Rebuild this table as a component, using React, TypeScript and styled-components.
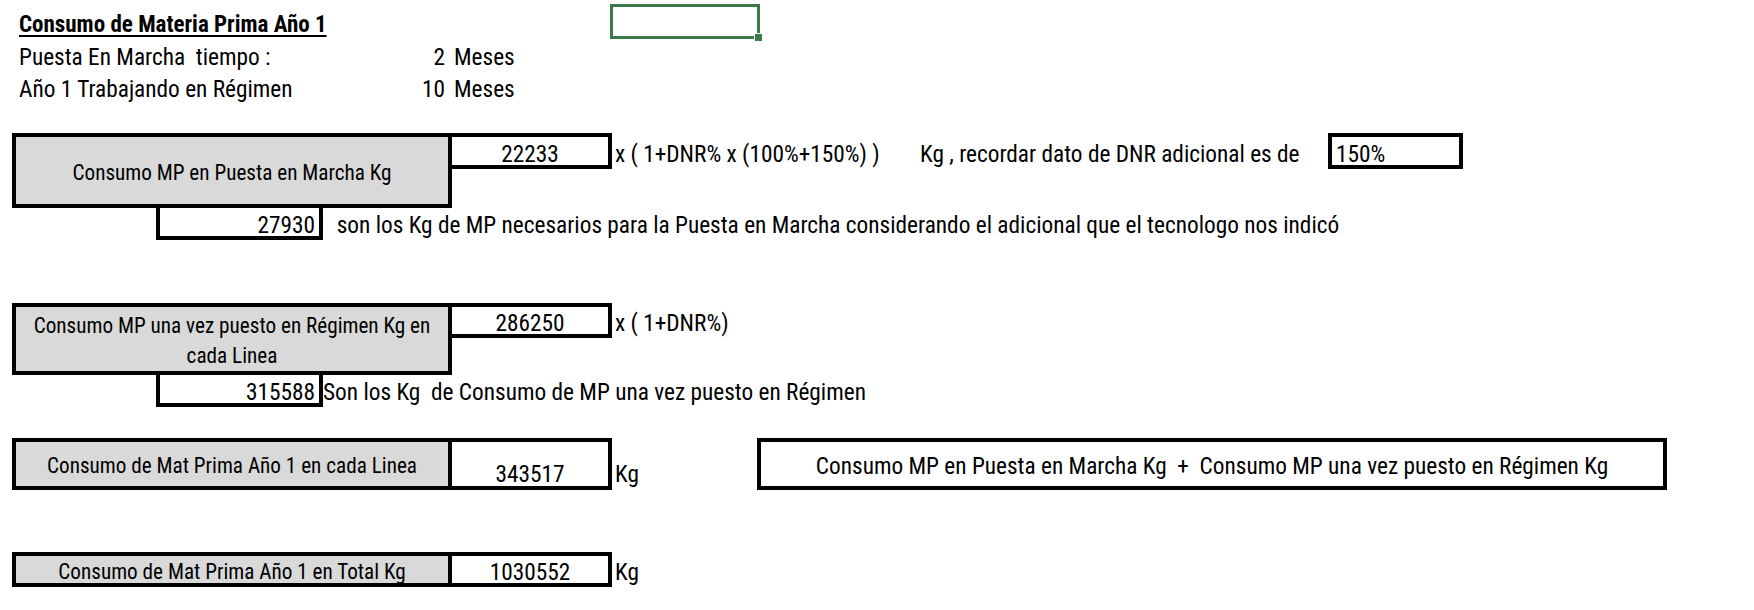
import React from 'react'
import styled, { createGlobalStyle } from 'styled-components'

const GlobalStyle = createGlobalStyle`
  html, body { margin: 0; padding: 0; background: #ffffff; }
  body { font-family: "Roboto Condensed", "Liberation Sans", sans-serif; color: #000; }
`

// ---| Sheet |--------------------------------------------

const Sheet = styled.main`
  position: relative;
  width: 1754px;
  height: 610px;
  padding: 6px 0 0 12px;
  box-sizing: border-box;
  font-size: 23.3px;
  overflow: hidden;
`

// celda seleccionada (marco verde de excel)
const Selected = styled.div`
  position: absolute;
  left: 610px;
  top: 4px;
  width: 150px;
  height: 35px;
  box-sizing: border-box;
  border: 3px solid #3b7a4a;

  &::after {
    content: '';
    position: absolute;
    right: -6px;
    bottom: -6px;
    width: 7px;
    height: 7px;
    background: #3b7a4a;
    border: 1px solid #fff;
  }
`

// ---| Header |-------------------------------------------

const HeaderRow = styled.div`
  height: 32px;
  padding: 5px 0 0 7px;
  box-sizing: border-box;
  display: flex;
  align-items: center;
`

const Title = styled.h1`
  margin: 0;
  font-size: 23px;
  font-weight: 700;
  text-decoration: underline;
  text-underline-offset: 3px;
  text-decoration-thickness: 1.5px;
`

const InfoLabel = styled.span`
  width: 330px;
`

const InfoNum = styled.span`
  width: 96px;
  text-align: right;
`

const InfoUnit = styled.span`
  margin-left: 9px;
`

// ---| Bloques |------------------------------------------

const Block = styled.section<{ $gap: number }>`
  margin-top: ${p => p.$gap}px;
  display: flex;
  flex-direction: column;
`

const MainRow = styled.div<{ $h: number }>`
  height: ${p => p.$h}px;
  display: flex;
  align-items: flex-start;
`

const Label = styled.div<{ $h: number }>`
  width: 440px;
  height: ${p => p.$h}px;
  padding-top: 4px;
  box-sizing: border-box;
  border: 4px solid #000;
  background: #d9d9d9;
  font-size: 21.2px;
  line-height: 30px;
  text-align: center;
  display: flex;
  align-items: center;
  justify-content: center;
`

const Value = styled.div<{ $h: number; $align?: 'center' | 'left' | 'right'; $bottom?: boolean }>`
  width: 164px;
  height: ${p => p.$h}px;
  margin-left: -4px;
  padding: ${p => (p.$bottom ? '0 6px' : '5px 6px 0')};
  box-sizing: border-box;
  border: 4px solid #000;
  background: #fff;
  line-height: ${p => (p.$bottom ? 1 : 'normal')};
  display: flex;
  align-items: ${p => (p.$bottom ? 'flex-end' : 'center')};
  justify-content: ${p => (p.$align === 'left' ? 'flex-start' : p.$align === 'right' ? 'flex-end' : 'center')};
`

const Pct = styled(Value)`
  width: 135px;
  margin-left: 0;
  padding: 5px 4px 0;
`

const Note = styled.div<{ $h: number; $w?: number; $bottom?: boolean; $tight?: boolean }>`
  ${p => (p.$w ? `width: ${p.$w}px;` : '')}
  height: ${p => p.$h}px;
  padding: ${p => (p.$bottom ? '0 0 4px' : '5px 0 0')};
  padding-left: ${p => (p.$tight ? 0 : 3)}px;
  flex: none;
  box-sizing: border-box;
  white-space: pre;
  line-height: ${p => (p.$bottom ? 1 : 'normal')};
  display: flex;
  align-items: ${p => (p.$bottom ? 'flex-end' : 'center')};
`

const SubRow = styled.div`
  margin-top: -4px;
  padding-left: 144px;
  display: flex;
  align-items: center;
`

const Result = styled(Value)`
  width: 167px;
  margin-left: 0;
  padding: 5px 4px 0;
`

const Formula = styled.div`
  width: 910px;
  height: 52px;
  padding-top: 3px;
  box-sizing: border-box;
  border: 4px solid #000;
  white-space: pre;
  display: flex;
  align-items: center;
  justify-content: center;
`

export default function App() {
  return (
    <>
      <GlobalStyle />
      <Sheet>
        <Selected />

        <HeaderRow>
          <Title>Consumo de Materia Prima Año 1</Title>
        </HeaderRow>
        <HeaderRow>
          <InfoLabel>Puesta En Marcha&nbsp; tiempo :</InfoLabel>
          <InfoNum>2</InfoNum>
          <InfoUnit>Meses</InfoUnit>
        </HeaderRow>
        <HeaderRow>
          <InfoLabel>Año 1 Trabajando en Régimen</InfoLabel>
          <InfoNum>10</InfoNum>
          <InfoUnit>Meses</InfoUnit>
        </HeaderRow>

        <Block $gap={31}>
          <MainRow $h={75}>
            <Label $h={75}>Consumo MP en Puesta en Marcha Kg</Label>
            <Value $h={36}>22233</Value>
            <Note $h={36} $w={305}>x ( 1+DNR% x (100%+150%) )</Note>
            <Note $h={36} $w={411}>Kg , recordar dato de DNR adicional es de</Note>
            <Pct $h={36} $align="left">150%</Pct>
          </MainRow>
          <SubRow>
            <Result $h={36} $align="right">27930</Result>
            <Note $h={36}>  son los Kg de MP necesarios para la Puesta en Marcha considerando el adicional que el tecnologo nos indicó</Note>
          </SubRow>
        </Block>

        <Block $gap={63}>
          <MainRow $h={72}>
            <Label $h={72}>Consumo MP una vez puesto en Régimen Kg en<br />cada Linea</Label>
            <Value $h={35}>286250</Value>
            <Note $h={35}>x ( 1+DNR%)</Note>
          </MainRow>
          <SubRow>
            <Result $h={36} $align="right">315588</Result>
            <Note $h={36} $tight>Son los Kg  de Consumo de MP una vez puesto en Régimen</Note>
          </SubRow>
        </Block>

        <Block $gap={31}>
          <MainRow $h={52}>
            <Label $h={52}>Consumo de Mat Prima Año 1 en cada Linea</Label>
            <Value $h={52} $bottom>343517</Value>
            <Note $h={52} $w={145} $bottom>Kg</Note>
            <Formula>Consumo MP en Puesta en Marcha Kg  +  Consumo MP una vez puesto en Régimen Kg</Formula>
          </MainRow>
        </Block>

        <Block $gap={62}>
          <MainRow $h={35}>
            <Label $h={35}>Consumo de Mat Prima Año 1 en Total Kg</Label>
            <Value $h={35}>1030552</Value>
            <Note $h={35}>Kg</Note>
          </MainRow>
        </Block>
      </Sheet>
    </>
  )
}
